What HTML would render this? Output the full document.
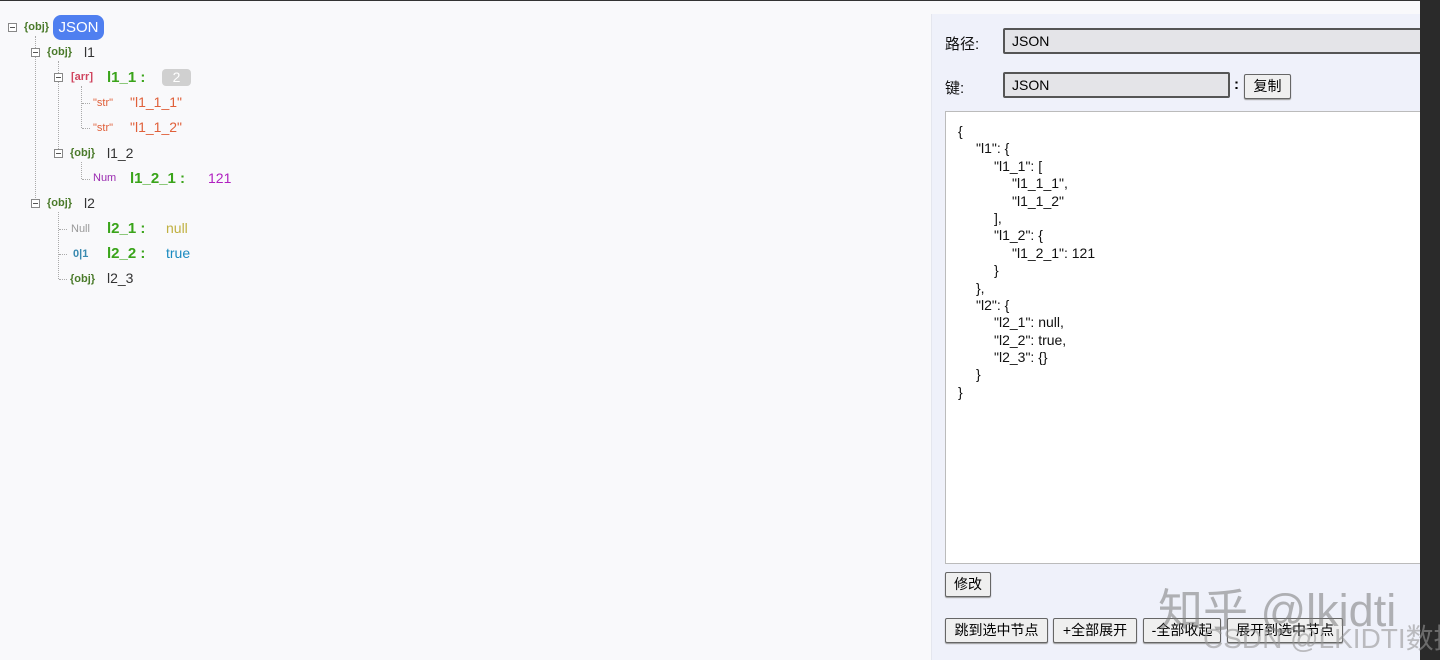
<!DOCTYPE html>
<html><head><meta charset="utf-8"><style>
*{margin:0;padding:0;box-sizing:border-box}
html,body{width:1440px;height:660px;overflow:hidden}
body{background:#f9f9fb;font-family:"Liberation Sans","Noto Sans CJK SC",sans-serif;position:relative}
.a{position:absolute;white-space:pre}
.box{position:absolute;width:9px;height:9px;border:1px solid #888;background:#fff}
.box:after{content:"";position:absolute;left:1px;top:3px;width:5px;height:1px;background:#555}
.vl{position:absolute;border-left:1px dotted #aaa}
.hl{position:absolute;border-top:1px dotted #aaa;width:8px}
.t{font-size:11px;font-weight:bold}
.obj{color:#4a7a2a}
.k{font-size:15px;font-weight:bold;color:#3aa41a}
.n{font-size:14px;color:#333}
.btn{position:absolute;height:25px;border:1px solid #666;border-radius:2px;background:#efefef;font-size:14px;text-align:center;line-height:23px;box-shadow:0 1px 1px #999}
.inp{position:absolute;height:26px;border:2px solid #555;border-radius:2px;background:#e4e4e8;font-size:14px;padding-left:7px;line-height:22px}
.js{position:absolute;white-space:normal}
.js div{height:17.4px;white-space:pre;display:block}
</style></head><body>
<div style="position:absolute;left:0;top:0;width:1440px;height:1px;background:#333"></div>
<div class="vl" style="left:35px;top:36px;height:168px"></div>
<div class="vl" style="left:58px;top:61px;height:92px"></div>
<div class="vl" style="left:81px;top:86px;height:42px"></div>
<div class="vl" style="left:81px;top:162px;height:17px"></div>
<div class="vl" style="left:58px;top:212px;height:67px"></div>
<div class="hl" style="left:82px;top:103px"></div><div class="hl" style="left:82px;top:128px"></div>
<div class="hl" style="left:82px;top:179px"></div>
<div class="hl" style="left:59px;top:229px"></div><div class="hl" style="left:59px;top:254px"></div><div class="hl" style="left:59px;top:279px"></div>

<div class="box" style="left:8px;top:23px"></div>
<div class="a t obj" style="left:24px;top:21px">{obj}</div>
<div class="a" style="left:53px;top:15px;width:51px;height:25px;background:#4f7ff0;border-radius:8px;color:#fff;font-size:15px;text-align:center;line-height:25px">JSON</div>

<div class="box" style="left:31px;top:48px"></div>
<div class="a t obj" style="left:47px;top:46px">{obj}</div><div class="a n" style="left:84px;top:44px">l1</div>

<div class="box" style="left:54px;top:73px"></div>
<div class="a t" style="left:71px;top:71px;color:#d0455f">[arr]</div>
<div class="a k" style="left:107px;top:69px">l1_1 :</div>
<div class="a" style="left:162px;top:69px;width:29px;height:17px;background:#d0d0d0;border-radius:4px;color:#fff;font-size:14px;text-align:center;line-height:17px">2</div>

<div class="a t" style="left:93px;top:97px;color:#e0603a;font-weight:normal">"str"</div><div class="a" style="left:130px;top:94px;font-size:14px;color:#e0603a">"l1_1_1"</div>
<div class="a t" style="left:93px;top:122px;color:#e0603a;font-weight:normal">"str"</div><div class="a" style="left:130px;top:119px;font-size:14px;color:#e0603a">"l1_1_2"</div>

<div class="box" style="left:54px;top:149px"></div>
<div class="a t obj" style="left:70px;top:147px">{obj}</div><div class="a n" style="left:107px;top:145px">l1_2</div>

<div class="a t" style="left:93px;top:172px;color:#9a2ab0;font-weight:normal">Num</div>
<div class="a k" style="left:130px;top:170px">l1_2_1 :</div>
<div class="a" style="left:208px;top:170px;font-size:14px;color:#b020c0">121</div>

<div class="box" style="left:31px;top:199px"></div>
<div class="a t obj" style="left:47px;top:197px">{obj}</div><div class="a n" style="left:84px;top:195px">l2</div>

<div class="a t" style="left:71px;top:223px;color:#999;font-weight:normal">Null</div>
<div class="a k" style="left:107px;top:220px">l2_1 :</div><div class="a" style="left:166px;top:220px;font-size:14px;color:#c0b040">null</div>
<div class="a t" style="left:73px;top:248px;color:#3a8ab0">0|1</div>
<div class="a k" style="left:107px;top:245px">l2_2 :</div><div class="a" style="left:166px;top:245px;font-size:14px;color:#1a8ac0">true</div>
<div class="a t obj" style="left:70px;top:273px">{obj}</div><div class="a n" style="left:107px;top:270px">l2_3</div>

<div style="position:absolute;left:931px;top:14px;width:489px;height:646px;background:#eff1fa;border-left:1px solid #e4e6ee"></div>
<div class="a" style="left:945px;top:33px;font-size:15px;color:#111">路径:</div>
<div class="inp" style="left:1003px;top:28px;width:420px">JSON</div>
<div class="a" style="left:945px;top:77px;font-size:15px;color:#111">键:</div>
<div class="inp" style="left:1003px;top:72px;width:227px">JSON</div>
<div class="a" style="left:1234px;top:76px;font-size:15px;font-weight:bold">:</div>
<div class="btn" style="left:1244px;top:74px;width:47px">复制</div>
<div style="position:absolute;left:945px;top:111px;width:476px;height:453px;background:#fff;border:1px solid #bbb;border-right:none"></div>
<div class="js" style="left:958px;top:123px;font-size:14px;line-height:17.4px;color:#111"><div>{</div><div style="padding-left:18px">"l1": {</div><div style="padding-left:36px">"l1_1": [</div><div style="padding-left:54px">"l1_1_1",</div><div style="padding-left:54px">"l1_1_2"</div><div style="padding-left:36px">],</div><div style="padding-left:36px">"l1_2": {</div><div style="padding-left:54px">"l1_2_1": 121</div><div style="padding-left:36px">}</div><div style="padding-left:18px">},</div><div style="padding-left:18px">"l2": {</div><div style="padding-left:36px">"l2_1": null,</div><div style="padding-left:36px">"l2_2": true,</div><div style="padding-left:36px">"l2_3": {}</div><div style="padding-left:18px">}</div><div>}</div></div>
<div class="btn" style="left:945px;top:572px;width:46px">修改</div>
<div class="btn" style="left:945px;top:618px;width:103px">跳到选中节点</div>
<div class="btn" style="left:1053px;top:618px;width:84px">+全部展开</div>
<div class="btn" style="left:1143px;top:618px;width:78px">-全部收起</div>
<div class="btn" style="left:1227px;top:618px;width:116px">展开到选中节点</div>
<div style="position:absolute;left:1420px;top:0;width:20px;height:660px;background:#2a2a2a"></div>
<div class="a" style="left:1158px;top:574px;font-size:45px;color:rgba(120,120,120,0.55)">知乎 @lkidti</div>
<div class="a" style="left:1203px;top:617px;font-size:28px;color:rgba(150,150,150,0.6)">CSDN @LKIDTI数据</div>
</body></html>
